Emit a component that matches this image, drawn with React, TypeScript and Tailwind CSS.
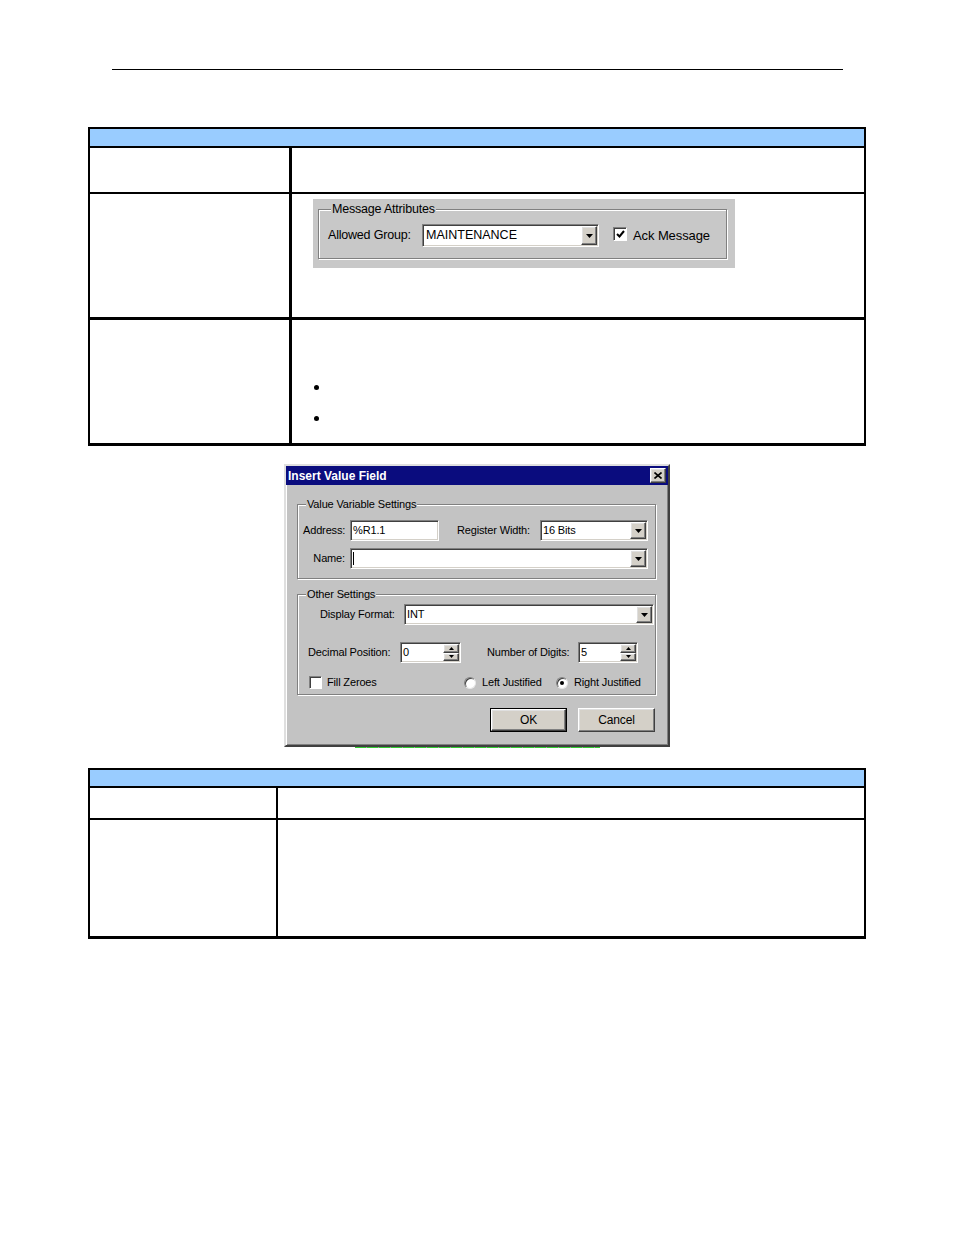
import type { ReactNode } from 'react';

// classic win9x bevels
const sunken =
  'border border-t-[#808080] border-l-[#808080] border-b-white border-r-white shadow-[inset_1px_1px_0_#404040,inset_-1px_-1px_0_#d4d0c8] bg-white';
const raised =
  'border border-t-white border-l-white border-b-[#404040] border-r-[#404040] shadow-[inset_-1px_-1px_0_#808080,inset_1px_1px_0_#dfdfdf] bg-[#d4d0c8]';

function DownArrow() {
  return (
    <svg width="7" height="4" viewBox="0 0 7 4">
      <path d="M0 0h7L3.5 4z" fill="#000" />
    </svg>
  );
}

function Combo({ className, value, text }: { className: string; value: ReactNode; text: string }) {
  return (
    <div className={`${sunken} ${className} flex items-stretch`}>
      <div className={`flex-1 flex items-center pl-[2px] ${text}`}>{value}</div>
      <div className={`${raised} w-[16px] m-[1px] flex items-center justify-center`}>
        <DownArrow />
      </div>
    </div>
  );
}

function Spin({ value }: { value: string }) {
  return (
    <div className={`${sunken} h-[21px] w-full flex items-stretch`}>
      <div className="flex-1 flex items-center pl-[2px]">{value}</div>
      <div className="flex flex-col w-[16px] m-[1px]">
        <div className={`${raised} flex-1 flex items-center justify-center`}>
          <svg width="5" height="3" viewBox="0 0 5 3">
            <path d="M0 3h5L2.5 0z" fill="#000" />
          </svg>
        </div>
        <div className={`${raised} flex-1 flex items-center justify-center`}>
          <svg width="5" height="3" viewBox="0 0 5 3">
            <path d="M0 0h5L2.5 3z" fill="#000" />
          </svg>
        </div>
      </div>
    </div>
  );
}

function Radio({ on }: { on?: boolean }) {
  return (
    <div className="w-[12px] h-[12px] rounded-full bg-white border border-t-[#808080] border-l-[#808080] border-b-[#e8e8e8] border-r-[#e8e8e8] shadow-[inset_1px_1px_0_#404040] flex items-center justify-center">
      {on && <div className="w-[4px] h-[4px] rounded-full bg-black" />}
    </div>
  );
}

function Group({ legend, className, children }: { legend: string; className: string; children: ReactNode }) {
  return (
    <div
      className={`relative border border-[#808080] shadow-[inset_1px_1px_0_#fff,1px_1px_0_#fff] ${className}`}
    >
      <span className="absolute -top-[8px] left-[8px] px-[1px] bg-[#c3c3c3] leading-[14px]">{legend}</span>
      {children}
    </div>
  );
}

export default function App() {
  return (
    <div className="w-[954px] h-[1235px] bg-white font-['Liberation_Sans',Arial,sans-serif] text-black pt-[69px]">
      <div className="ml-[112px] w-[731px] h-px bg-black" />

      {/* first table */}
      <div className="ml-[88px] mt-[57px] w-[778px] border-2 border-b-[3px] border-black">
        <div className="h-[19px] bg-[#99ccff] border-b-2 border-black" />
        <div className="flex h-[46px] border-b-2 border-black">
          <div className="w-[202px] border-r-[3px] border-black" />
          <div className="flex-1" />
        </div>
        <div className="flex h-[126px] border-b-[3px] border-black">
          <div className="w-[202px] border-r-[3px] border-black" />
          <div className="flex-1 pl-[21px] pt-[5px]">
            <div className="w-[422px] h-[69px] bg-[#c8c8c8] pl-[5px] pt-[10px] text-[12.5px]">
              <div className="relative w-[409px] h-[50px] border border-[#808080] shadow-[inset_1px_1px_0_#fff,1px_1px_0_#fff] flex items-start pt-[14px] pl-[9px]">
                <span className="absolute -top-[9px] left-[12px] px-[1px] bg-[#c8c8c8] leading-[16px] tracking-[-0.2px]">
                  Message Attributes
                </span>
                <span className="w-[94px] h-[23px] flex items-center tracking-[-0.2px]">Allowed Group:</span>
                <Combo className="w-[177px] h-[23px]" text="pl-[3px]" value="MAINTENANCE" />
                <div className="ml-[14px] mt-[3px] w-[14px] h-[14px] bg-white border border-t-[#808080] border-l-[#808080] border-b-white border-r-white shadow-[inset_1px_1px_0_#404040] flex items-center justify-center">
                  <svg width="9" height="9" viewBox="0 0 9 9">
                    <path d="M1 4l2.5 2.5L8 1" stroke="#000" strokeWidth="2" fill="none" />
                  </svg>
                </div>
                <span className="ml-[6px] h-[23px] flex items-center text-[13px] tracking-[-0.1px]">Ack Message</span>
              </div>
            </div>
          </div>
        </div>
        <div className="flex h-[123px]">
          <div className="w-[202px] border-r-[3px] border-black" />
          <div className="flex-1 pl-[22px] pt-[65px] flex flex-col gap-[26px]">
            <div className="w-[5px] h-[5px] rounded-full bg-black" />
            <div className="w-[5px] h-[5px] rounded-full bg-black" />
          </div>
        </div>
      </div>

      {/* dialog */}
      <div className="mx-auto mt-[18px] w-[386px] h-[283px] bg-[#c3c3c3] border-2 border-t-[#dfdfdf] border-l-[#dfdfdf] border-b-[#404040] border-r-[#404040] shadow-[inset_1px_1px_0_#fff,inset_-1px_-1px_0_#808080] text-[11px] tracking-[-0.15px]">
        <div className="h-[19px] bg-[#0a0c7e] flex items-center justify-between pl-[2px] pr-[2px]">
          <span className="text-white font-bold text-[12px] tracking-[0px]">Insert Value Field</span>
          <div className={`${raised} w-[16px] h-[15px] flex items-center justify-center`}>
            <svg width="8" height="7" viewBox="0 0 8 7">
              <path d="M0.5 0.5l7 6M7.5 0.5l-7 6" stroke="#000" strokeWidth="1.6" />
            </svg>
          </div>
        </div>

        <div className="pl-[11px] pr-[12px]">
          <Group legend="Value Variable Settings" className="mt-[19px] h-[75px] pt-[15px] pl-[5px]">
            <div className="flex items-center h-[21px]">
              <span className="w-[47px]">Address:</span>
              <div className={`${sunken} w-[89px] h-[21px] flex items-center pl-[2px]`}>%R1.1</div>
              <span className="ml-[18px] w-[83px]">Register Width:</span>
              <Combo className="w-[108px] h-[21px]" text="" value="16 Bits" />
            </div>
            <div className="flex items-center h-[21px] mt-[7px]">
              <span className="w-[47px] text-right pr-[5px]">Name:</span>
              <Combo
                className="w-[298px] h-[21px]"
                text=""
                value={<span className="w-px h-[13px] bg-black" />}
              />
            </div>
          </Group>

          <Group legend="Other Settings" className="mt-[15px] h-[101px] pt-[9px]">
            <div className="flex items-center h-[21px]">
              <span className="ml-[22px] w-[84px]">Display Format:</span>
              <Combo className="w-[250px] h-[21px]" text="" value="INT" />
            </div>
            <div className="flex items-center h-[21px] mt-[17px]">
              <span className="ml-[10px] w-[92px]">Decimal Position:</span>
              <div className="w-[61px]">
                <Spin value="0" />
              </div>
              <span className="ml-[26px] w-[91px]">Number of Digits:</span>
              <div className="w-[60px]">
                <Spin value="5" />
              </div>
            </div>
            <div className="flex items-center h-[13px] mt-[13px]">
              <div className="ml-[11px] w-[155px] flex items-center">
                <div className="w-[13px] h-[13px] bg-white border border-t-[#808080] border-l-[#808080] border-b-white border-r-white shadow-[inset_1px_1px_0_#404040]" />
                <span className="ml-[5px]">Fill Zeroes</span>
              </div>
              <div className="w-[92px] flex items-center">
                <Radio />
                <span className="ml-[6px]">Left Justified</span>
              </div>
              <div className="flex items-center">
                <Radio on />
                <span className="ml-[6px]">Right Justified</span>
              </div>
            </div>
          </Group>

          <div className="mt-[13px] flex justify-end gap-[11px] pr-[1px]">
            <div className="w-[77px] h-[24px] border border-black">
              <div className={`${raised} w-full h-full flex items-center justify-center text-[12px]`}>OK</div>
            </div>
            <div className={`${raised} w-[77px] h-[24px] flex items-center justify-center text-[12px]`}>
              Cancel
            </div>
          </div>
        </div>
      </div>
      {/* bit of the window behind the dialog */}
      <div className="mx-auto w-[386px] h-px pl-[71px]">
        <div className="w-[245px] h-px bg-[repeating-linear-gradient(90deg,#33cc33_0_11px,#9a9a9a_11px_12px)]" />
      </div>

      {/* second table */}
      <div className="ml-[88px] mt-[20px] w-[778px] border-2 border-b-[3px] border-black">
        <div className="h-[18px] bg-[#99ccff] border-b-2 border-black" />
        <div className="flex h-[32px] border-b-2 border-black">
          <div className="w-[188px] border-r-2 border-black" />
          <div className="flex-1" />
        </div>
        <div className="flex h-[116px]">
          <div className="w-[188px] border-r-2 border-black" />
          <div className="flex-1" />
        </div>
      </div>
    </div>
  );
}
